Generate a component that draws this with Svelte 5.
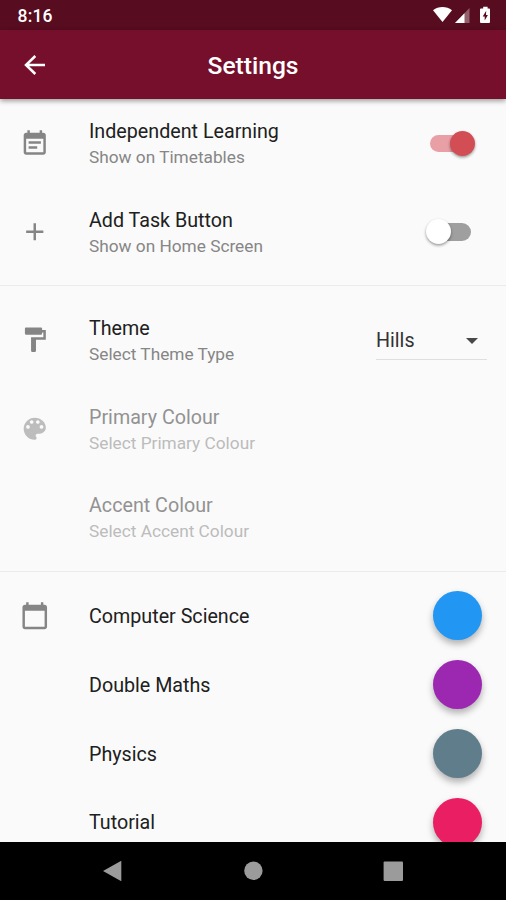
<script lang="ts">
  const icons = {
    note: 'M17 10H7v2h10v-2zm2-7h-1V1h-2v2H8V1H6v2H5c-1.11 0-1.99.9-1.99 2L3 19c0 1.1.89 2 2 2h14c1.1 0 2-.9 2-2V5c0-1.1-.9-2-2-2zm0 16H5V8h14v11zm-5-5H7v2h7v-2z',
    add: 'M19 13h-6v6h-2v-6H5v-2h6V5h2v6h6v2z',
    paint: 'M18 4V3c0-.55-.45-1-1-1H5c-.55 0-1 .45-1 1v4c0 .55.45 1 1 1h12c.55 0 1-.45 1-1V6h1v4H9v11c0 .55.45 1 1 1h2c.55 0 1-.45 1-1v-9h8V4h-3z',
    palette: 'M12 3c-4.97 0-9 4.03-9 9s4.03 9 9 9c.83 0 1.5-.67 1.5-1.5 0-.39-.15-.74-.39-1.01-.23-.26-.38-.61-.38-.99 0-.83.67-1.5 1.5-1.5H16c2.76 0 5-2.24 5-5 0-4.42-4.03-8-9-8zm-5.5 9c-.83 0-1.5-.67-1.5-1.5S5.67 9 6.5 9 8 9.67 8 10.5 7.33 12 6.5 12zm3-4C8.67 8 8 7.33 8 6.5S8.67 5 9.5 5s1.5.67 1.5 1.5S10.33 8 9.5 8zm5 0c-.83 0-1.5-.67-1.5-1.5S13.67 5 14.5 5s1.5.67 1.5 1.5S15.33 8 14.5 8zm3 4c-.83 0-1.5-.67-1.5-1.5S16.67 9 17.5 9s1.5.67 1.5 1.5-.67 1.5-1.5 1.5z',
    calendar: 'M20 3h-1V1h-2v2H7V1H5v2H4c-1.1 0-2 .9-2 2v16c0 1.1.9 2 2 2h16c1.1 0 2-.9 2-2V5c0-1.1-.9-2-2-2zm0 18H4V8h16v13z',
  };

  let toggles = $state([
    { icon: icons.note, title: 'Independent Learning', subtitle: 'Show on Timetables', on: true },
    { icon: icons.add, title: 'Add Task Button', subtitle: 'Show on Home Screen', on: false },
  ]);

  const colours = [
    { icon: icons.palette, title: 'Primary Colour', subtitle: 'Select Primary Colour' },
    { icon: '', title: 'Accent Colour', subtitle: 'Select Accent Colour' },
  ];

  const subjects = [
    { name: 'Computer Science', colour: '#2196f3' },
    { name: 'Double Maths', colour: '#9c27b0' },
    { name: 'Physics', colour: '#607d8b' },
    { name: 'Tutorial', colour: '#e91e63' },
  ];
</script>

{#snippet leading(path: string)}
  <div class="leading">
    {#if path}
      <svg viewBox="0 0 24 24"><path d={path} /></svg>
    {/if}
  </div>
{/snippet}

{#snippet label(title: string, subtitle: string)}
  <div class="label">
    <div class="title">{title}</div>
    <div class="subtitle">{subtitle}</div>
  </div>
{/snippet}

<div class="screen">
  <div class="status">
    <span class="clock">8:16</span>
    <svg width="60" height="20" viewBox="0 0 60 20">
      <path d="M1 5.2C6.5 1 14.5 1 20 5.2L10.500 17z" fill="#fff" />
      <path d="M37.5 3v15H23z" fill="#fff" opacity="0.35" />
      <path d="M32.5 8.200V18H23z" fill="#fff" />
      <path d="M49 3.500h2.200V1.800h4.400v1.700H57q1 0 1 1V17q0 1-1 1h-8q-1 0-1-1V4.500q0-1 1-1z" fill="#fff" />
      <path d="M54.2 5.800l-3.500 5.700h2V15.500l3.200-5.500h-1.900z" fill="#580c20" />
    </svg>
  </div>

  <header>
    <button class="back" aria-label="Back">
      <svg width="24" height="24" viewBox="0 0 24 24">
        <path d="M12.3 3 3 12l9.300 9M3.500 12H22" fill="none" stroke="#fff" stroke-width="2.500" />
      </svg>
    </button>
    <h1>Settings</h1>
  </header>

  <main>
    {#each toggles as item}
      <div class="row">
        {@render leading(item.icon)}
        {@render label(item.title, item.subtitle)}
        <button
          class="switch"
          class:on={item.on}
          role="switch"
          aria-checked={item.on}
          aria-label={item.title}
          onclick={() => (item.on = !item.on)}
        >
          <span class="thumb"></span>
        </button>
      </div>
    {/each}

    <div class="divider"></div>

    <div class="row">
      {@render leading(icons.paint)}
      {@render label('Theme', 'Select Theme Type')}
      <div class="dropdown">
        <span>Hills</span>
        <svg width="12" height="6" viewBox="0 0 12 6"><path d="M0 0h12L6 6z" /></svg>
      </div>
    </div>
    {#each colours as item}
      <div class="row disabled">
        {@render leading(item.icon)}
        {@render label(item.title, item.subtitle)}
      </div>
    {/each}

    <div class="divider"></div>

    {#each subjects as subject, i}
      <div class="row subject">
        {@render leading(i === 0 ? icons.calendar : '')}
        <div class="label title">{subject.name}</div>
        <button class="dot" aria-label={subject.name} style="background: {subject.colour}"></button>
      </div>
    {/each}
  </main>

  <nav>
    <svg viewBox="0 0 20 22"><path d="M0 11 18.300.800v20.400z" /></svg>
    <svg viewBox="0 0 20 22"><circle cx="10.4" cy="10.800" r="9.200" /></svg>
    <svg viewBox="0 0 20 22"><rect x=".6" y="1.500" width="19.400" height="19.400" rx="1" /></svg>
  </nav>
</div>

<style>
  :global(body) {
    margin: 0;
  }

  .screen {
    display: flex;
    flex-direction: column;
    width: 506px;
    height: 900px;
    overflow: hidden;
    background: #fafafa;
    font-family: Roboto, 'Liberation Sans', sans-serif;
  }

  button {
    padding: 0;
    border: none;
    background: none;
    cursor: pointer;
  }

  svg {
    display: block;
  }

  .status {
    display: flex;
    flex: none;
    align-items: center;
    justify-content: space-between;
    height: 30px;
    padding: 0 14px 0 17.5px;
    box-sizing: border-box;
    background: #580c20;
    color: #fff;
  }

  .clock {
    padding-top: 1px;
    font-size: 17.5px;
    font-weight: 500;
    letter-spacing: 0.2px;
  }

  header {
    display: grid;
    grid-template-columns: 70px 1fr 70px;
    flex: none;
    align-items: center;
    height: 69px;
    background: #760f2b;
    color: #fff;
    box-shadow: 0 2px 5px rgba(0, 0, 0, 0.38);
    z-index: 1;
  }

  .back {
    justify-self: center;
  }

  h1 {
    margin: 0;
    padding-top: 1px;
    font-size: 24.6px;
    font-weight: 500;
    text-align: center;
  }

  main {
    flex: 1;
    min-height: 0;
    overflow: hidden;
  }

  .row {
    display: flex;
    align-items: center;
    height: 88.6px;
    padding: 0 19px 0 20px;
  }

  .leading {
    flex: none;
    width: 69px;
  }

  .leading svg {
    width: 29.5px;
    height: 29.5px;
    fill: #858585;
  }

  .label {
    flex: 1;
  }

  .title {
    padding-top: 2px;
    font-size: 19.7px;
    line-height: 24px;
    color: #202020;
  }

  .subtitle {
    margin-top: 2px;
    font-size: 17.25px;
    line-height: 22px;
    color: #868686;
  }

  .disabled .title {
    color: #929292;
  }

  .disabled .subtitle {
    color: #bcbcbc;
  }

  .disabled .leading svg {
    fill: #bdbdbd;
  }

  .divider {
    height: 19.7px;
    background: linear-gradient(#ebebeb, #ebebeb) 0 9px / 100% 1px no-repeat;
  }

  .switch {
    position: relative;
    width: 41px;
    height: 17.5px;
    margin-right: 16px;
    border-radius: 9px;
    background: #9f9f9f;
  }

  .thumb {
    position: absolute;
    top: -4px;
    left: -4px;
    width: 25px;
    height: 25px;
    border-radius: 50%;
    background: #fff;
    box-shadow: 0 1.5px 3px rgba(0, 0, 0, 0.4);
  }

  .switch.on {
    background: #e8a0a6;
  }

  .switch.on .thumb {
    left: 19.5px;
    background: #d34d55;
  }

  .dropdown {
    display: flex;
    align-items: center;
    justify-content: space-between;
    width: 111px;
    height: 39px;
    padding: 2px 9px 0 0;
    box-sizing: border-box;
    border-bottom: 1px solid #dfdfdf;
    font-size: 19.7px;
    color: #333;
  }

  .dropdown svg {
    fill: #484848;
  }

  .subject {
    height: 68.9px;
    padding-right: 24px;
  }

  .dot {
    width: 49px;
    height: 49px;
    border-radius: 50%;
    box-shadow: 0 4px 7px rgba(0, 0, 0, 0.3);
  }

  nav {
    display: flex;
    flex: none;
    justify-content: space-between;
    height: 58px;
    padding: 18px 103px 0;
    box-sizing: border-box;
    background: #000;
  }

  nav svg {
    width: 20px;
    height: 22px;
    fill: #9b9b9b;
  }
</style>
